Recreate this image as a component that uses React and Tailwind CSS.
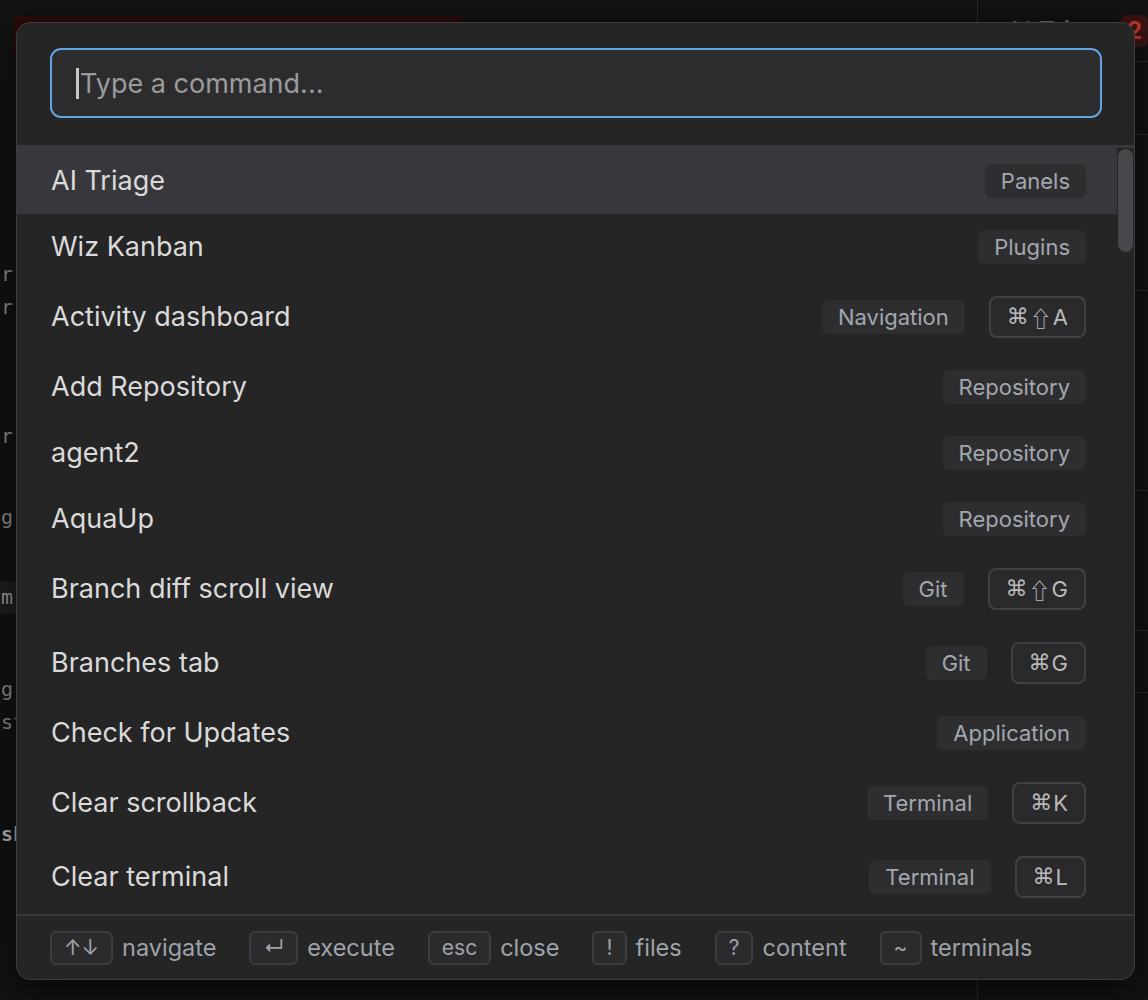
import React from "react";

const rows = [
  { title: "AI Triage", cat: "Panels", selected: true },
  { title: "Wiz Kanban", cat: "Plugins" },
  { title: "Activity dashboard", cat: "Navigation", keys: ["⌘", "⇧", "A"] },
  { title: "Add Repository", cat: "Repository" },
  { title: "agent2", cat: "Repository" },
  { title: "AquaUp", cat: "Repository" },
  { title: "Branch diff scroll view", cat: "Git", keys: ["⌘", "⇧", "G"] },
  { title: "Branches tab", cat: "Git", keys: ["⌘", "G"] },
  { title: "Check for Updates", cat: "Application" },
  { title: "Clear scrollback", cat: "Terminal", keys: ["⌘", "K"] },
  { title: "Clear terminal", cat: "Terminal", keys: ["⌘", "L"] },
  { title: "Close tab", cat: "Tabs", keys: ["⌘", "W"] },
  { title: "Command palette", cat: "Navigation", keys: ["⌘", "⇧", "P"] },
];

const footer = [
  { k: "↑↓", label: "navigate" },
  { k: "↵", label: "execute" },
  { k: "esc", label: "close" },
  { k: "!", label: "files" },
  { k: "?", label: "content" },
  { k: "~", label: "terminals" },
];

function KeyGlyph({ g }) {
  if (g === "⇧")
    return <span className="font-['Noto_Sans_CJK_JP','DejaVu_Sans',sans-serif] text-[22px]">{g}</span>;
  if (g === "⌘") return <span className="font-['DejaVu_Sans',sans-serif]">{g}</span>;
  return <span className="font-[Inter,sans-serif]">{g}</span>;
}

function Row({ r }) {
  return (
    <div
      className={
        "flex items-center justify-between pl-[34px] pr-[31px] py-4 " +
        (r.selected ? "bg-[#38383c]" : "")
      }
    >
      <span className="text-[27px] leading-[34px] text-[#dadada]">{r.title}</span>
      <div className="flex items-center gap-6">
        <span className="h-[34px] px-4 flex items-center rounded-[6px] bg-[#2e2e31] text-[22px] leading-none text-[#a3a7ae]">
          {r.cat}
        </span>
        {r.keys && (
          <span className="h-[42px] px-[16px] flex items-center gap-[1px] rounded-[8px] border-2 border-[#414145] bg-[#2a2a2d] text-[22px] leading-none text-[#b9b9b9]">
            {r.keys.map((g, i) => (
              <KeyGlyph key={i} g={g} />
            ))}
          </span>
        )}
      </div>
    </div>
  );
}

export default function App() {
  return (
    <div className="relative w-[1148px] h-[1000px] overflow-hidden bg-[#121212] font-[Inter,'Noto_Sans',sans-serif]">
      {/* background app */}
      <div className="flex h-full">
        <div className="w-[977px] flex flex-col font-['DejaVu_Sans_Mono',monospace] text-[20px] text-[#8a8a8a]">
          <div className="mt-4 ml-[14px] w-[446px] h-[40px] bg-[#2a0b0b]" />
          <div className="mt-[202px] h-[33px] leading-[33px] pl-[1px]">r in progress</div>
          <div className="h-[33px] leading-[33px] pl-[1px]">r in progress</div>
          <div className="mt-[96px] h-[33px] leading-[33px] pl-[1px]">r queued</div>
          <div className="mt-[48px] h-[33px] leading-[33px] pl-[1px]">g running</div>
          <div className="mt-[47px] h-[33px] leading-[33px] pl-[1px] bg-[#1e1e1e] text-[#9a9a9a]">m main</div>
          <div className="mt-[59px] h-[33px] leading-[33px] pl-[1px]">g: status</div>
          <div className="h-[33px] leading-[33px] pl-[1px]">st checks</div>
          <div className="mt-[79px] h-[33px] leading-[33px] pl-[1px] font-bold text-[#b5b5b5]">sh</div>
        </div>
        <div className="flex-1 border-l border-[#2a2a2a] flex flex-col text-[22px] text-[#8f8f8f]">
          <div className="h-[62px] flex items-center justify-between pl-7 border-b border-[#2a2a2a]">
            <span className="text-[#6c6c6c] text-[26px]">AI Triage</span>
            <span className="h-[32px] px-[6px] rounded-md bg-[#3a1414] text-[#c0392b] font-bold text-[24px] flex items-center">2</span>
          </div>
          <div className="h-[73px] border-b border-[#2a2a2a] pl-4 pt-8 text-[#777]">review new,</div>
          <div className="flex flex-col pl-4 pt-3 leading-[33px] h-[156px] border-b border-[#2a2a2a]">
            <span>Auto-triage lc</span>
            <span>of failing fa</span>
            <span>builds and ar</span>
            <span>notificati on</span>
          </div>
          <div className="h-[200px] flex flex-col pl-4 pt-5 leading-[33px] border-b border-[#2a2a2a]">
            <span>preview new</span>
            <span>pull request de</span>
            <span className="text-[#bdbdbd]">for triage ri</span>
            <span>and tests</span>
            <span className="font-['DejaVu_Sans_Mono',monospace] text-[20px]">src/lib/</span>
          </div>
          <div className="h-[140px] flex flex-col pl-4 pt-5 leading-[30px] font-['DejaVu_Sans_Mono',monospace] text-[20px] border-b border-[#2a2a2a]">
            <span>## A</span>
            <span>--- -</span>
            <span>const ol</span>
          </div>
          <div className="h-[62px] pl-4 pt-3 border-b border-[#2a2a2a]">more re</div>
        </div>
      </div>

      {/* command palette */}
      <div className="absolute left-[16px] top-[22px] w-[1119px] h-[958px] rounded-[14px] border border-[#3d3d40] bg-[#252526] flex flex-col overflow-hidden shadow-[0_10px_40px_rgba(0,0,0,0.6)]">
        <div className="pt-[25px] pb-[27px] pl-[33px] pr-[32px] border-b-[3px] border-[#38383b]">
          <div className="h-[70px] rounded-[11px] border-2 border-[#64a3dc] bg-[#2c2c2f] flex items-center pl-[24px]">
            <span className="w-[3px] h-[31px] bg-[#c8c8c8] mr-[1px]" />
            <span className="text-[27px] leading-none text-[#9b9b9b]">Type a command...</span>
          </div>
        </div>
        <div className="relative h-[766px] shrink-0 overflow-hidden pr-[17px]">
          {rows.map((r) => (
            <Row key={r.title} r={r} />
          ))}
          <div className="absolute right-[1px] top-[1px] w-[15px] h-[103px] rounded-full bg-[#48484c]" />
        </div>
        <div className="flex-1 border-t-2 border-[#38383b] flex items-center gap-[33px] pl-[33px]">
          {footer.map((f) => (
            <div key={f.label} className="flex items-center gap-[9px]">
              <span className="h-[34px] px-[12px] flex items-center justify-center rounded-[6px] border-2 border-[#3d3d41] bg-[#2b2b2e] text-[21px] leading-none text-[#9ea3aa]">
                {f.k}
              </span>
              <span className="text-[23.5px] leading-none text-[#9ea3aa]">{f.label}</span>
            </div>
          ))}
        </div>
      </div>
    </div>
  );
}
